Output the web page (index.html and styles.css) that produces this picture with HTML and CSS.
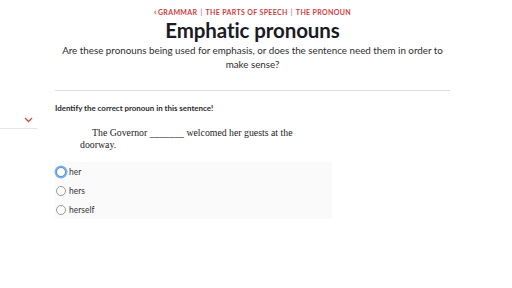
FILE: index.html
```html
<!DOCTYPE html>
<html>
<head>
<meta charset="utf-8">
<link rel="stylesheet" href="styles.css">
</head>
<body>
<header class="hero">
  <nav class="crumbs"><span class="chev">‹</span>GRAMMAR<span class="sep">|</span>THE PARTS OF SPEECH<span class="sep">|</span>THE PRONOUN</nav>
  <h1 class="title">Emphatic pronouns</h1>
  <p class="lede">Are these pronouns being used for emphasis, or does the sentence need them in order to make sense?</p>
</header>
<div class="layout">
  <aside class="side">
    <div class="toggle">
      <svg class="caret" width="9" height="6" viewBox="0 0 9 6"><path d="M1 1 L4.5 4.5 L8 1" fill="none" stroke="#e0443f" stroke-width="1.3"/></svg>
    </div>
  </aside>
  <main class="main">
    <hr class="rule">
    <p class="prompt">Identify the correct pronoun in this sentence!</p>
    <p class="sentence">The Governor _______ welcomed her guests at the doorway.</p>
    <div class="options">
      <label class="opt"><span class="radio focus"></span>her</label>
      <label class="opt"><span class="radio"></span>hers</label>
      <label class="opt"><span class="radio"></span>herself</label>
    </div>
  </main>
</div>
</body>
</html>
```
FILE: styles.css
```css
html, body { margin: 0; padding: 0; background: #fff; }
body { font-family: Lato, "Liberation Sans", sans-serif; color: #2a2a2a; width: 512px; }
.hero { width: 395px; margin-left: 55px; text-align: center; padding-top: 8px; }
.crumbs { font-size: 7px; font-weight: 700; letter-spacing: 0.35px; color: #d23c3c; line-height: 8px; }
.chev { font-size: 9px; margin-right: 1px; }
.sep { margin: 0 3px; font-weight: 400; }
.title { margin: 1px 0 0; font-size: 20.5px; line-height: 26px; font-weight: 700; color: #1b1b24; letter-spacing: -0.1px; font-variant-ligatures: none; }
.lede { margin: 0; font-size: 9.8px; line-height: 14px; color: #2e2e2e; }
.layout { display: grid; grid-template-columns: 37px 395px; column-gap: 18px; margin-top: 19px; }
.side { padding-top: 27px; }
.toggle { height: 11px; border-bottom: 1px solid #e4e4e4; display: flex; justify-content: flex-end; align-items: flex-start; padding-right: 4px; }
.caret { display: block; }
.rule { border: 0; border-top: 1px solid #dedede; margin: 0; }
.prompt { margin: 13px 0 0; font-size: 7.9px; font-weight: 700; color: #2a2a2a; line-height: 9px; }
.sentence { margin: 14px 0 0; padding: 0 125px 0 25px; text-indent: 12px; font-family: "Liberation Serif", serif; font-size: 9.8px; line-height: 12px; color: #222; }
.options { margin-top: 11px; width: 277px; background: #fafafa; padding: 0; box-sizing: border-box; }
.opt { display: flex; align-items: center; height: 19px; font-size: 8.5px; color: #333; }
.radio { width: 8px; height: 8px; border: 1px solid #9a9a9a; border-radius: 50%; margin: 0 3px 0 1px; background: #fff; box-sizing: content-box; }
.radio.focus { border: 1px solid #4d8fe0; box-shadow: 0 0 0 1.5px #7fb0ee; }
```
